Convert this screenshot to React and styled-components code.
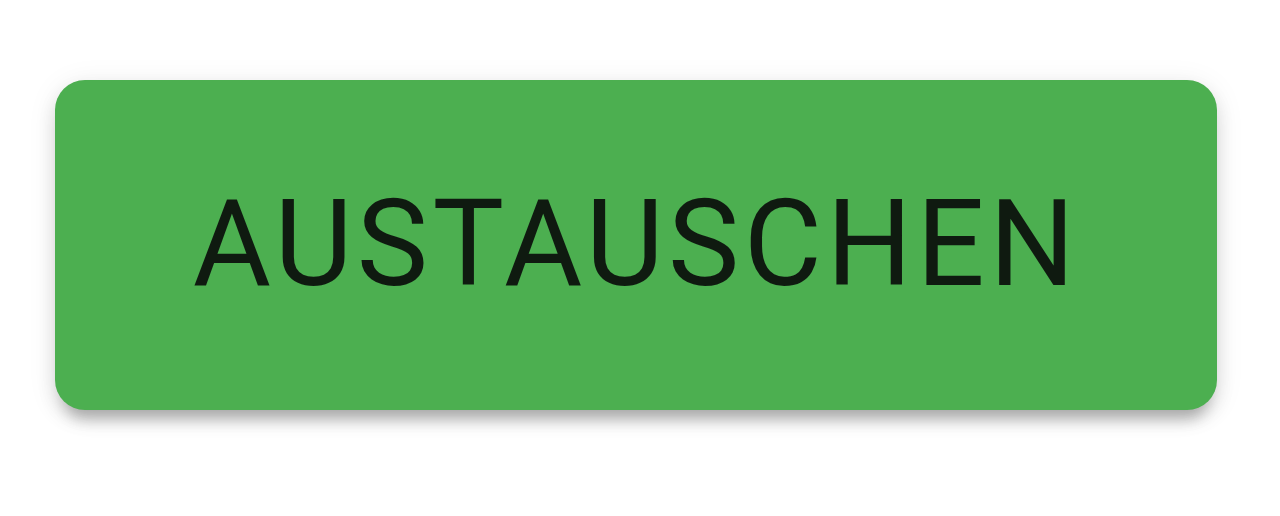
import React from 'react';
import styled, { createGlobalStyle } from 'styled-components';

const GlobalStyle = createGlobalStyle`
  html, body {
    margin: 0;
    padding: 0;
    background: #ffffff;
  }
`;

const Page = styled.div`
  width: 1280px;
  height: 516px;
  padding: 80px 0 0 55px;
  box-sizing: border-box;
  display: flex;
  align-items: flex-start;
`;

const SwapButton = styled.button`
  width: 1162px;
  height: 330px;
  display: flex;
  align-items: center;
  justify-content: center;
  padding: 0 0 2px;
  border: none;
  border-radius: 30px;
  background: #4caf50;
  color: #0f1a10;
  font-family: Roboto, 'Liberation Sans', sans-serif;
  font-weight: 400;
  font-size: 120px;
  letter-spacing: 4.5px;
  text-transform: uppercase;
  box-shadow: 0 18px 14px -10px rgba(0, 0, 0, 0.22),
    0 10px 18px 0 rgba(0, 0, 0, 0.12), 0 4px 30px 0 rgba(0, 0, 0, 0.08);
  cursor: pointer;
`;

const App = () => (
  <>
    <GlobalStyle />
    <Page>
      <SwapButton>Austauschen</SwapButton>
    </Page>
  </>
);

export default App;
